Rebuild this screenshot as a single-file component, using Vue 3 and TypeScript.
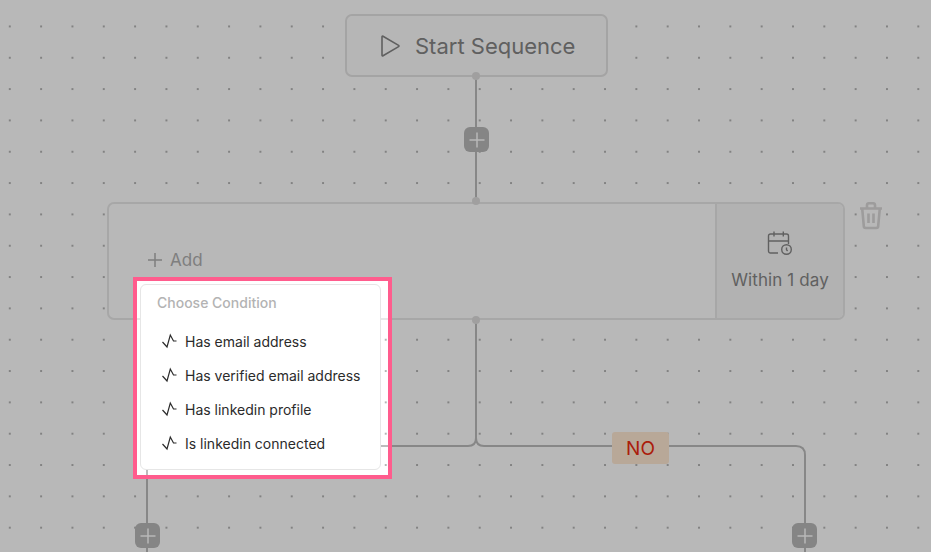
<template>
  <div class="canvas">
    <div class="start">
      <svg class="start__icon" width="20" height="22" viewBox="0 0 20 22" fill="none">
        <path d="M2 1.8v18.4c0 .6.5.9 1 .6l15.6-9.2c.5-.3.5-.9 0-1.2L3 1.2c-.5-.3-1 0-1 .6Z" />
      </svg>
      <span>Start Sequence</span>
    </div>

    <div class="branch">
      <div class="branch__main">
        <div class="branch__add">
          <svg width="16" height="16" viewBox="0 0 16 16" fill="none">
            <path d="M8 1v14M1 8h14" />
          </svg>
          <span>Add</span>
        </div>
      </div>
      <div class="branch__delay">
        <svg class="branch__cal" width="26" height="26" viewBox="0 0 26 26" fill="none">
          <path d="M11 23H3.5A2 2 0 0 1 1.500 21V6A2 2 0 0 1 3.500 4H19.500A2 2 0 0 1 21.500 6V14M1.500 11H21.500M7 1.500V6.500M16.300 1.500V6.500" />
          <circle cx="19.500" cy="19.500" r="4.800" />
          <path d="M19.500 17.500V19.800L20.600 21" />
        </svg>
        <span>Within 1 day</span>
      </div>
    </div>

    <svg class="wires" width="931" height="552" viewBox="0 0 931 552" fill="none">
      <path d="M476 76V201M476 320V438Q476 446 468 446H155Q147 446 147 454V552M476 438Q476 446 484 446H796Q805 446 805 455V552" />
      <circle cx="476" cy="76" r="4" />
      <circle cx="476" cy="201" r="4" />
      <circle cx="476" cy="320" r="4" />
    </svg>

    <svg class="trash" width="24" height="28" viewBox="0 0 24 28" fill="none">
      <path d="M1 6.500H23M8 6.500V3A1.800 1.800 0 0 1 9.800 1.300H14.200A1.800 1.800 0 0 1 16 3V6.500M3.200 6.500L4.800 24A2 2 0 0 0 6.800 26H17.200A2 2 0 0 0 19.200 24L20.800 6.500M9.500 11.500V21M14.500 11.500V21" />
    </svg>

    <button v-for="pos in plusButtons" :key="pos" class="plus" :class="`plus--${pos}`">
      <svg width="16" height="16" viewBox="0 0 16 16" fill="none">
        <path d="M8 .5v15M.5 8h15" />
      </svg>
    </button>

    <div class="tag">NO</div>

    <!-- highlighted step of the tour, box-shadow dims everything around it -->
    <div class="spotlight">
      <div class="menu">
        <div class="menu__title">Choose Condition</div>
        <div v-for="item in conditions" :key="item" class="menu__item">
          <svg width="16" height="16" viewBox="0 0 16 16" fill="none">
            <path d="M.5 9L5 14L8.300 2L11.500 8H14.500" />
          </svg>
          <span>{{ item }}</span>
        </div>
      </div>
    </div>
  </div>
</template>

<script setup lang="ts">
const plusButtons: string[] = ['top', 'left', 'right']

const conditions: string[] = [
  'Has email address',
  'Has verified email address',
  'Has linkedin profile',
  'Is linkedin connected',
]
</script>

<style>
html,
body {
  margin: 0;
  background: #fff;
}
</style>

<style scoped>
.canvas {
  position: relative;
  width: 931px;
  height: 552px;
  overflow: hidden;
  font-family: Inter, "Liberation Sans", sans-serif;
  background-color: #fff;
  background-image: radial-gradient(circle at 9.7px 26.3px, #b4b4b4 0.9px, transparent 1.2px);
  background-size: 31.33px 31.33px;
}

.wires {
  position: absolute;
  inset: 0;
}

.wires path {
  stroke: #bcbcbc;
  stroke-width: 2;
}

.wires circle {
  fill: #dedddd;
}

.start {
  position: absolute;
  left: 345px;
  top: 14px;
  width: 263px;
  height: 63px;
  box-sizing: border-box;
  display: flex;
  align-items: center;
  gap: 15px;
  padding-left: 33px;
  border: 2px solid #e4e3e3;
  border-radius: 7px;
  background: #fdfdfd;
  color: #858585;
  font-size: 22px;
}

.start__icon path {
  stroke: #858585;
  stroke-width: 1.6;
}

.branch {
  position: absolute;
  left: 107px;
  top: 202px;
  width: 738px;
  height: 118px;
  box-sizing: border-box;
  display: flex;
  border: 2px solid #e8e8e8;
  border-radius: 7px;
  background: #fff;
}

.branch__main {
  flex: 1;
  display: flex;
  align-items: flex-start;
  padding: 46px 0 0 38px;
  border-right: 2px solid #e8e8e8;
}

.branch__add {
  display: flex;
  align-items: center;
  gap: 7px;
  color: #b0b0b0;
  font-size: 17px;
}

.branch__add path {
  stroke: #b0b0b0;
  stroke-width: 1.5;
}

.branch__delay {
  width: 126px;
  flex: none;
  display: flex;
  flex-direction: column;
  align-items: center;
  padding-top: 26px;
  gap: 14px;
  background: #f7f7f7;
  border-radius: 0 5px 5px 0;
  color: #868686;
  font-size: 17px;
  letter-spacing: 0.1px;
}

.branch__cal path,
.branch__cal circle {
  stroke: #868686;
  stroke-width: 1.4;
}

.trash {
  position: absolute;
  left: 859px;
  top: 202px;
}

.trash path {
  stroke: #dad8d8;
  stroke-width: 2.6;
}

.plus {
  position: absolute;
  width: 25px;
  height: 25px;
  padding: 0;
  display: flex;
  align-items: center;
  justify-content: center;
  border: 0;
  border-radius: 6px;
  background: #b9b9b9;
}

.plus path {
  stroke: #fff;
  stroke-width: 1.5;
}

.plus--top {
  left: 464px;
  top: 127px;
}

.plus--left {
  left: 135px;
  top: 523px;
}

.plus--right {
  left: 792px;
  top: 523px;
}

.tag {
  position: absolute;
  left: 612px;
  top: 432px;
  width: 57px;
  height: 32px;
  display: flex;
  align-items: center;
  justify-content: center;
  border-radius: 3px;
  background: #ffe9d3;
  color: #ee2a0e;
  font-size: 19px;
}

.spotlight {
  position: absolute;
  left: 133px;
  top: 277px;
  width: 259px;
  height: 202px;
  box-sizing: border-box;
  padding: 3px 7px 5px 3px;
  display: flex;
  border: 4px solid #ff5c8d;
  box-shadow: 0 0 0 1000px rgba(0, 0, 0, 0.28);
}

.menu {
  flex: 1;
  box-sizing: border-box;
  padding: 9px 15px 0 16px;
  border: 1px solid #e6e6e6;
  border-radius: 6px;
  background: #fff;
}

.menu__title {
  height: 17px;
  line-height: 17px;
  margin-bottom: 13px;
  color: #b3b3b3;
  font-size: 14px;
  font-weight: 500;
}

.menu__item {
  display: flex;
  align-items: center;
  gap: 7px;
  height: 34px;
  padding-left: 5px;
  color: #2b2b2b;
  font-size: 14px;
  white-space: nowrap;
}

.menu__item path {
  stroke: #2b2b2b;
  stroke-width: 1.2;
}
</style>
